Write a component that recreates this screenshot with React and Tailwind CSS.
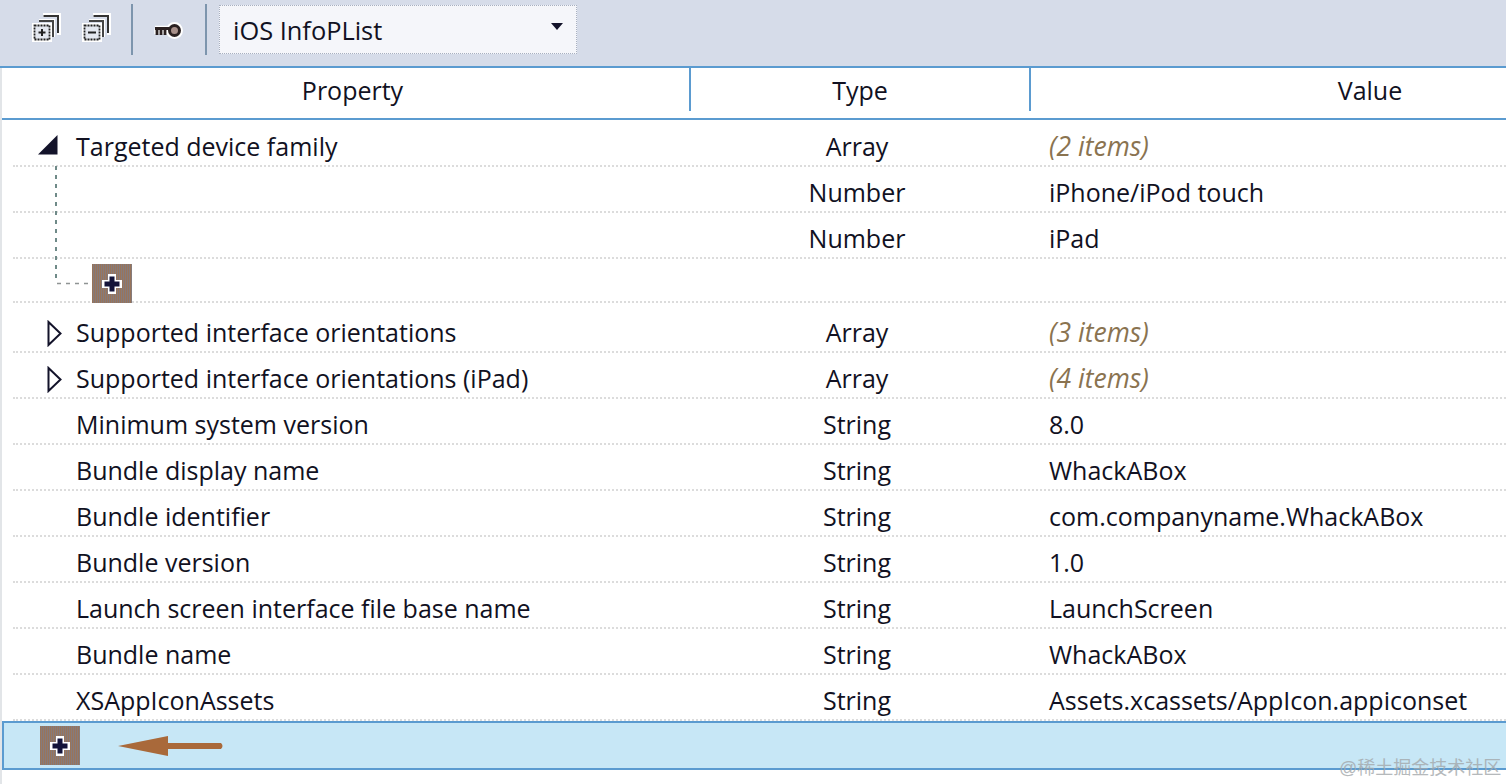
const font = { fontFamily: '"Open Sans", "Noto Sans", sans-serif' };

function Row({ name, type, value, italic, expander, h = "h-[46px]", pt = "pt-2" }) {
  return (
    <div className={`relative ml-[13px] flex ${h} items-center border-b-2 border-dotted border-[#dcdcdc] ${pt} text-[25px] text-[#111122]`}>
      <div className="relative flex w-[677px] shrink-0 items-center pl-[63px]">
        {expander === "open" && (
          <svg className="absolute left-[25px] top-[7px]" width="20" height="20" viewBox="0 0 20 20">
            <path d="M0 19.5 L19.5 0 V19.5 Z" fill="#13132a" />
          </svg>
        )}
        {expander === "closed" && (
          <svg className="absolute left-[34px] top-[6px]" width="16" height="27" viewBox="0 0 16 27">
            <path d="M1.5 2 L13.5 13.5 L1.5 25 Z" fill="white" stroke="#13132a" strokeWidth="2" />
          </svg>
        )}
        {name}
      </div>
      <div className="w-[340px] shrink-0 pr-[6px] text-center">{type}</div>
      <div className={`pl-[19px] whitespace-nowrap ${italic ? "text-[26.5px] italic text-[#8a7350]" : ""}`}>{value}</div>
    </div>
  );
}

function PlusButton() {
  return (
    <div className="flex h-[39px] w-[40px] items-center justify-center bg-[repeating-linear-gradient(90deg,#98745a_0_1px,#857b7c_1px_2px)]">
      <svg width="22" height="22" viewBox="0 0 22 22">
        <path d="M7 1 H15 V7 H21 V15 H15 V21 H7 V15 H1 V7 H7 Z" fill="white" />
        <path d="M8.5 3.5 H13.5 V8.5 H18.5 V13.5 H13.5 V18.5 H8.5 V13.5 H3.5 V8.5 H8.5 Z" fill="#13133a" />
      </svg>
    </div>
  );
}

function StackIcon({ minus }) {
  return (
    <svg width="30" height="30" viewBox="0 0 30 30">
      <path d="M11 2 H27 V22" fill="none" stroke="white" strokeWidth="4" />
      <path d="M11.5 3 H26 V20" fill="none" stroke="#333" strokeWidth="2" />
      <path d="M7 7.5 H21.5 V24" fill="none" stroke="white" strokeWidth="3" />
      <path d="M7 8 H21 V24" fill="none" stroke="#444" strokeWidth="2" />
      <rect x="2" y="12" width="16" height="15" fill="#d6dce9" stroke="white" strokeWidth="4" />
      <rect x="2.5" y="12.5" width="15" height="14" fill="#e4e8f0" stroke="#222" strokeWidth="1.8" strokeDasharray="2 1" />
      {minus ? (
        <path d="M6 19.5 H14" stroke="#222" strokeWidth="2" />
      ) : (
        <path d="M6.5 19.5 H13.5 M10 16 V23" stroke="#222" strokeWidth="2" />
      )}
    </svg>
  );
}

function KeyIcon() {
  return (
    <svg width="30" height="18" viewBox="0 0 30 18">
      <path d="M1 6.5 H18 M3 6.5 V12 M7 6.5 V12 M11 6.5 V12" fill="none" stroke="white" strokeWidth="5.5" />
      <circle cx="20.5" cy="8.5" r="8.5" fill="white" />
      <path d="M1 6.5 H18 M3 6.5 V13 M7 6.5 V13 M11 6.5 V13" fill="none" stroke="#2a2020" strokeWidth="2.8" />
      <circle cx="20.5" cy="8.5" r="5" fill="#a8908a" stroke="#2a2020" strokeWidth="3" />
    </svg>
  );
}

export default function App() {
  return (
    <div className="relative h-[784px] w-[1506px] overflow-hidden bg-white" style={font}>
      {/* Toolbar */}
      <div className="flex h-[66px] items-start bg-[#d6dce9]">
        <div className="ml-[32px] mt-[13px]"><StackIcon /></div>
        <div className="ml-[20px] mt-[13px]"><StackIcon minus /></div>
        <div className="ml-[19px] mt-[4px] h-[51px] w-[2px] bg-[#7d95ad]" />
        <div className="ml-[21px] mt-[22px]"><KeyIcon /></div>
        <div className="ml-[21px] mt-[4px] h-[51px] w-[2px] bg-[#7d95ad]" />
        <div className="relative ml-[12px] mt-[5px] flex h-[49px] w-[358px] items-center border border-dotted border-[#a8b0c0] bg-[#f5f6fa] pl-[13px] pt-[2px] text-[25.4px] text-[#111122]">
          iOS InfoPList
          <svg className="absolute right-[12px] top-[16px]" width="14" height="9" viewBox="0 0 14 9">
            <path d="M1 1 H13 L7 8 Z" fill="#13132a" />
          </svg>
        </div>
      </div>

      {/* Header */}
      <div className="flex h-[54px] border-y-2 border-[#5b9bd0] text-[25px] text-[#111122]">
        <div className="flex h-[43px] w-[691px] shrink-0 items-center justify-center border-r-2 border-[#5b9bd0] pl-[16px] pt-[2px]">Property</div>
        <div className="flex h-[43px] w-[340px] shrink-0 items-center justify-center border-r-2 border-[#5b9bd0] pt-[2px]">Type</div>
        <div className="flex h-[43px] w-[678px] shrink-0 items-center justify-center pt-[2px]">Value</div>
      </div>

      {/* Rows */}
      <div className="mt-[1px]">
        <Row name="Targeted device family" type="Array" value="(2 items)" italic expander="open" />
        <Row type="Number" value="iPhone/iPod touch" />
        <Row type="Number" value="iPad" />
        <div className="relative ml-[13px] flex h-[44px] items-end border-b-2 border-dotted border-[#dcdcdc]">
          <div className="mb-[-2px] ml-[79px]"><PlusButton /></div>
        </div>
        <Row name="Supported interface orientations" type="Array" value="(3 items)" italic expander="closed" h="h-[50px]" pt="pt-[12px]" />
        <Row name="Supported interface orientations (iPad)" type="Array" value="(4 items)" italic expander="closed" />
        <Row name="Minimum system version" type="String" value="8.0" />
        <Row name="Bundle display name" type="String" value="WhackABox" />
        <Row name="Bundle identifier" type="String" value="com.companyname.WhackABox" />
        <Row name="Bundle version" type="String" value="1.0" />
        <Row name="Launch screen interface file base name" type="String" value="LaunchScreen" />
        <Row name="Bundle name" type="String" value="WhackABox" />
        <Row name="XSAppIconAssets" type="String" value="Assets.xcassets/AppIcon.appiconset" />
      </div>

      {/* Add row */}
      <div className="ml-[2px] mr-[-4px] flex h-[49px] items-center border-2 border-[#5b9bd0] bg-[#c7e7f6] pl-[36px]">
        <PlusButton />
        <svg className="ml-[38px]" width="106" height="20" viewBox="0 0 106 20">
          <path d="M0 10 L50 0 V7 H103 Q106 10 103 13 H50 V20 Z" fill="#a9693a" />
        </svg>
      </div>

      {/* Tree connector */}
      <svg className="absolute left-[54px] top-[166px]" width="40" height="120" viewBox="0 0 40 120">
        <path d="M2 0 V116" fill="none" stroke="#6f8a88" strokeWidth="2" strokeDasharray="4 5" />
        <path d="M3 117.5 H38" fill="none" stroke="#8f9494" strokeWidth="1.5" strokeDasharray="4 5" />
      </svg>

      {/* Left edge */}
      <div className="absolute left-0 top-[68px] h-[716px] w-[2px] bg-[#e2e5e8]" />

      {/* Watermark */}
      <div
        className="absolute left-[1339px] top-[755px] whitespace-nowrap text-[18px] text-[#a3a8ab] opacity-80"
        style={{ fontFamily: '"Liberation Sans", "Noto Sans CJK SC", sans-serif' }}
      >
        @稀土掘金技术社区
      </div>
    </div>
  );
}
